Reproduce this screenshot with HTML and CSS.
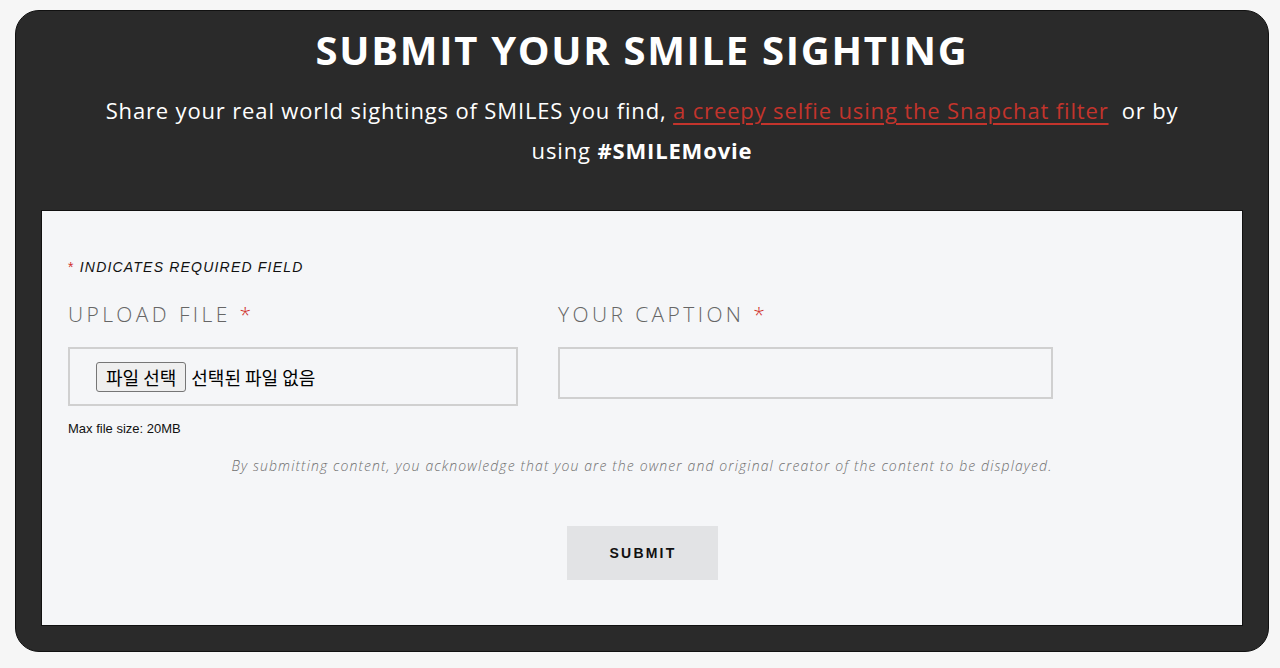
FILE: index.html
```html
<!DOCTYPE html>
<html lang="en">
<head>
<meta charset="utf-8">
<title>Submit your smile sighting</title>
<link rel="stylesheet" href="styles.css">
</head>
<body>
<section class="card">
  <header class="intro">
    <h1 class="title">SUBMIT YOUR SMILE SIGHTING</h1>
    <p class="lead">Share your real world sightings of SMILES you find, <a href="#" class="lead-link">a creepy selfie using the Snapchat filter</a>&nbsp; or by using <strong>#SMILEMovie</strong></p>
  </header>
  <form class="panel">
    <p class="required-note"><span class="star">*</span> INDICATES REQUIRED FIELD</p>
    <div class="fields">
      <div class="field field-upload">
        <label class="field-label">UPLOAD FILE <span class="star">*</span></label>
        <label class="file-box">
          <span class="file-btn">파일 선택</span>
          <span class="file-name">선택된 파일 없음</span>
        </label>
        <p class="hint">Max file size: 20MB</p>
      </div>
      <div class="field field-caption">
        <label class="field-label">YOUR CAPTION <span class="star">*</span></label>
        <input class="text-input" type="text">
      </div>
    </div>
    <p class="disclaimer">By submitting content, you acknowledge that you are the owner and original creator of the content to be displayed.</p>
    <div class="actions">
      <button type="button" class="submit">SUBMIT</button>
    </div>
  </form>
</section>
</body>
</html>
```

FILE: styles.css
```css
html, body {
  margin: 0;
  padding: 0;
}
body {
  background: #f6f6f6;
  padding: 10px 11px 0 15px;
  font-family: "Open Sans", "Noto Sans", sans-serif;
}
.card {
  box-sizing: border-box;
  height: 642px;
  background: #2a2a2a;
  border: 1px solid #111;
  border-radius: 24px;
  padding: 0 25px 25px 25px;
  display: flex;
  flex-direction: column;
}
.intro {
  text-align: center;
  color: #fff;
  display: flex;
  flex-direction: column;
  align-items: center;
}
.title {
  margin: 13px 0 0;
  font-size: 40px;
  line-height: 52px;
  font-weight: 700;
  letter-spacing: 1.7px;
}
.lead {
  max-width: 1110px;
  margin: 14px 0 0;
  font-size: 22px;
  line-height: 40px;
  font-weight: 400;
  letter-spacing: 0.85px;
}
.lead strong {
  font-weight: 700;
}
.lead-link {
  color: #c3342c;
  text-decoration: underline;
  text-underline-offset: 4px;
}
.panel {
  box-sizing: border-box;
  margin-top: auto;
  height: 416px;
  background: #f5f6f8;
  border: 1px solid #111;
  padding: 0 26px;
}
.required-note {
  margin: 47px 0 0;
  font-family: "Liberation Sans", Arial, sans-serif;
  font-style: italic;
  font-size: 14px;
  letter-spacing: 1.2px;
  color: #111;
  line-height: 18px;
}
.star {
  color: #d0312d;
  font-style: normal;
}
.fields {
  display: flex;
  gap: 40px;
  margin-top: 25px;
}
.field {
  display: flex;
  flex-direction: column;
}
.field-upload {
  width: 450px;
}
.field-caption {
  width: 495px;
}
.field-label {
  font-size: 21px;
  font-weight: 300;
  letter-spacing: 3.4px;
  color: #666;
  line-height: 26px;
}
.file-box {
  box-sizing: border-box;
  margin-top: 20px;
  height: 59px;
  border: 2px solid #d0d0d0;
  display: flex;
  align-items: center;
  padding-left: 26px;
  font-family: "Noto Sans CJK KR", sans-serif;
  font-size: 18px;
  color: #000;
  gap: 5px;
}
.file-btn {
  box-sizing: border-box;
  height: 30px;
  padding: 0 9px;
  border: 1px solid #767676;
  border-radius: 3px;
  background: #efefef;
  display: flex;
  align-items: center;
  line-height: 1;
}
.hint {
  margin: 15px 0 0;
  font-family: "Liberation Sans", Arial, sans-serif;
  font-size: 13px;
  color: #111;
  line-height: 16px;
}
.text-input {
  box-sizing: border-box;
  margin-top: 20px;
  height: 52px;
  border: 2px solid #d0d0d0;
  background: #f5f6f8;
  outline: none;
}
.disclaimer {
  margin: 20px 0 0;
  text-align: center;
  font-size: 14px;
  font-style: italic;
  font-weight: 300;
  letter-spacing: 1.12px;
  color: #6f6f6f;
  line-height: 18px;
}
.actions {
  display: flex;
  justify-content: center;
  margin-top: 51px;
}
.submit {
  width: 151px;
  height: 54px;
  border: none;
  background: #e2e3e5;
  font-family: "Liberation Sans", Arial, sans-serif;
  font-weight: 700;
  font-size: 14px;
  letter-spacing: 2.2px;
  color: #111;
  padding: 0 0 0 2px;
}
```
